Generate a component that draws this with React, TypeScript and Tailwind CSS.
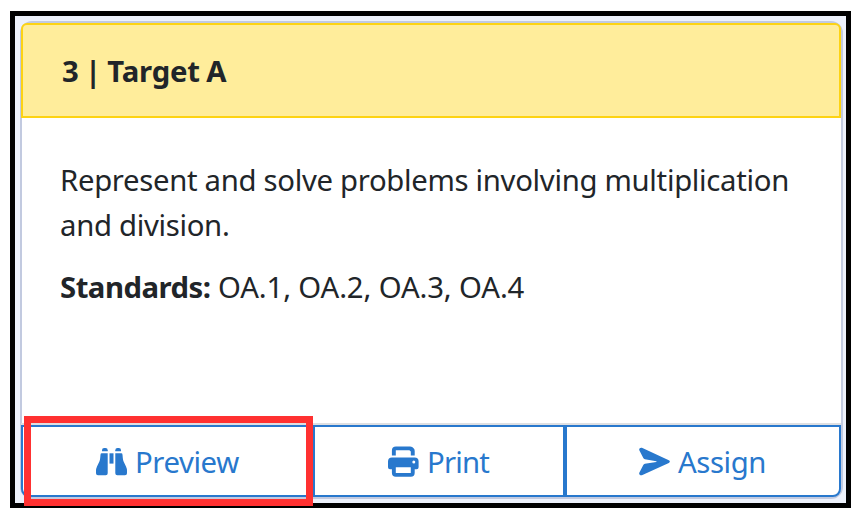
import React from 'react';

const BinocularsIcon: React.FC = () => (
  <svg className="w-[31px] h-[31px]" fill="currentColor" viewBox="0 0 31 31">
    <path d="M6 5.300V4.200Q6 2 8.200 2H9.500Q11.700 2 11.700 4.200V5.300Z" />
    <path d="M19.300 5.300V4.200Q19.300 2 21.500 2H22.800Q25 2 25 4.200V5.300Z" />
    <rect x="13.500" y="7.300" width="4" height="10.300" />
    <path d="M5.700 7.300H11.700V27.200Q11.700 29.200 9.700 29.200H2Q0 29.200 0 27.200V24.500Q0 22.800 1 20.500L3.400 15.500Q4 14 4.200 12L4.500 8.700Q4.600 7.300 5.700 7.300Z" />
    <path d="M25.300 7.300H19.300V27.200Q19.300 29.200 21.300 29.200H29Q31 29.200 31 27.200V24.500Q31 22.800 30 20.500L27.600 15.500Q27 14 26.800 12L26.500 8.700Q26.400 7.300 25.300 7.300Z" />
  </svg>
);

const PrintIcon: React.FC = () => (
  <svg className="w-[31px] h-[31px]" fill="currentColor" viewBox="0 0 31 31">
    <path d="M3.900 9.500V4.500Q3.900 0.400 8 0.400H22Q23.500 0.400 24.500 1.300L25.800 2.600Q26.700 3.600 26.700 5V9.500H22.800V5.500L21.400 4.200H7.800V9.500Z" />
    <path
      fillRule="evenodd"
      d="M4 11.600H26.600Q30.600 11.600 30.600 15.600V21.200Q30.600 23.200 28.600 23.200H26.700V26.800Q26.700 30.700 22.800 30.700H7.800Q3.900 30.700 3.900 26.800V23.200H2Q0 23.200 0 21.200V15.600Q0 11.600 4 11.600ZM7.800 21.200V27H22.800V21.200ZM25.800 14.600A1.500 1.500 0 1 0 25.800 17.600 1.500 1.500 0 1 0 25.800 14.600Z"
    />
  </svg>
);

const SendIcon: React.FC = () => (
  <svg className="w-[31px] h-[31px]" fill="currentColor" viewBox="0 0 31 31">
    <path d="M0.300 4.200C-0.300 2.700 1.300 1.200 2.900 1.800L29.800 14.300C31.200 15 31.200 16.200 29.800 16.900L2.900 29.200C1.300 29.800-0.300 28.300 0.300 26.800L4.300 19C4.600 18.300 5.200 17.900 5.900 17.800L17.300 15.900C17.700 15.800 17.700 15.300 17.300 15.200L5.900 13.300C5.200 13.200 4.600 12.700 4.300 12.100Z" />
  </svg>
);

interface ActionButtonProps {
  icon: React.ReactNode;
  label: string;
  className?: string;
}

const ActionButton: React.FC<ActionButtonProps> = ({ icon, label, className = '' }) => (
  <button className={`flex items-center border-y-2 border-[#2878cd] text-[#2878cd] ${className}`}>
    {icon}
    <span className="pt-[4px] leading-none whitespace-nowrap">{label}</span>
  </button>
);

export default function App() {
  return (
    <div className="w-[856px] h-[516px] overflow-hidden bg-white pt-[11px] pl-[10px] font-['Noto_Sans','Open_Sans',sans-serif] text-[29.3px] tracking-[-0.31px] text-[#212529]">
      <div className="relative w-[841px] h-[497px] border-[5px] border-black bg-[#edf1fb] pt-[5px] pl-[5px]">
        <div className="flex flex-col w-[823px] h-[478px] rounded-[12px] border-2 border-[#c2cae0] bg-white">
          {/* Header */}
          <div className="-ml-px w-[820px] h-[95px] shrink-0 rounded-t-[6px] border-2 border-[#fdd313] bg-[#ffed9b] pl-[39px] pt-[2px] flex items-center">
            <h2 className="font-bold leading-none tracking-[-0.2px] [word-spacing:-1px] whitespace-nowrap">3 | Target A</h2>
          </div>

          {/* Body */}
          <div className="flex-1 pl-[38px] pt-[40px] leading-[45px]">
            <p className="whitespace-nowrap">
              Represent and solve problems involving multiplication
              <br />
              and division.
            </p>
            <p className="mt-[17px] tracking-[-0.12px] whitespace-nowrap">
              <strong className="font-bold tracking-[-0.5px]">Standards:</strong> OA.1, OA.2, OA.3, OA.4
            </p>
          </div>

          {/* Actions */}
          <div className="-ml-px flex w-[820px] h-[74px] shrink-0 border-t-2 border-[#dedfe2]">
            <ActionButton
              icon={<BinocularsIcon />}
              label="Preview"
              className="w-[292px] rounded-bl-[8px] border-l-2 border-r-2 pl-[73px] gap-[8px] tracking-[-0.4px]"
            />
            <ActionButton
              icon={<PrintIcon />}
              label="Print"
              className="w-[252px] border-l-2 border-r-2 pl-[73px] gap-[8px] tracking-[-0.8px]"
            />
            <ActionButton
              icon={<SendIcon />}
              label="Assign"
              className="w-[276px] rounded-br-[8px] border-l-2 border-r-2 pl-[72px] gap-[8px] tracking-[-0.4px]"
            />
          </div>
        </div>

        {/* Highlight box */}
        <div className="absolute left-[9px] top-[400px] w-[289px] h-[90px] border-[7px] border-[#ff3131]" />
      </div>
    </div>
  );
}
